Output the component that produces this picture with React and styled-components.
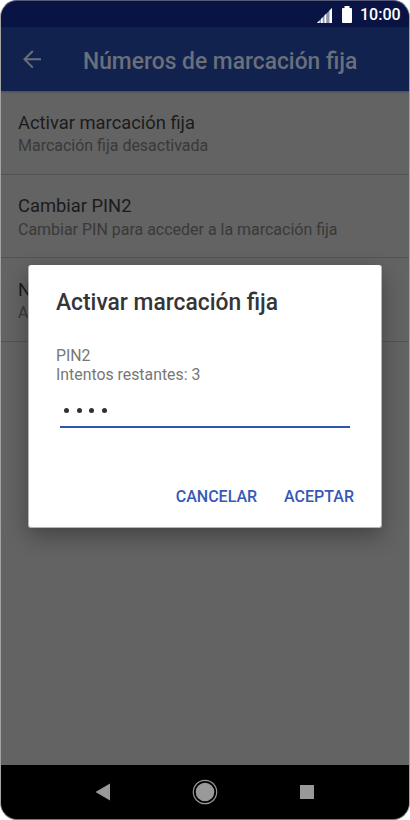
import React from 'react'

import styled, { createGlobalStyle } from 'styled-components'

const GlobalStyle = createGlobalStyle`
  body {
    margin: 0;
    background: #fff;
    font-family: Roboto, 'Liberation Sans', sans-serif;
  }
`

const Screen = styled.main`
  position: relative;
  display: flex;
  flex-direction: column;
  box-sizing: border-box;
  width: 410px;
  height: 820px;
  border: 1px solid #a3a3a3;
  border-top-color: #555a78;
  border-bottom-color: #777;
  border-radius: 17px;
  overflow: hidden;
  background: #636363;
`

const StatusBar = styled.header`
  display: flex;
  align-items: center;
  justify-content: flex-end;
  flex: none;
  box-sizing: border-box;
  height: 26px;
  padding-right: 8px;
  background: #0a1444;
  color: #fff;
  .signal {
    margin: 2px 10px 0 0;
  }
  .battery {
    margin-right: 8px;
  }
`

const Clock = styled.span`
  margin-top: 1px;
  font-size: 16px;
  font-weight: 500;
  line-height: 26px;
  width: 41px;
  white-space: nowrap;
`

const Heading = styled.h1`
  margin: 0;
  font-size: 24px;
  font-weight: 500;
  line-height: 32px;
  white-space: nowrap;
  transform: scaleX(.95);
  transform-origin: left;
`

const AppBar = styled.div`
  display: flex;
  align-items: center;
  flex: none;
  height: 64px;
  padding-left: 21px;
  background: #11224e;
  box-shadow: 0 1px 2px rgba(0, 0, 0, .25);
  color: #6a6f7a;
  ${Heading} {
    margin: 3px 0 0 41px;
  }
`

const List = styled.ul`
  flex: 1;
  margin: 0;
  padding: 0;
  list-style: none;
`

const Row = styled.li`
  box-sizing: border-box;
  height: 83.5px;
  padding: 19.5px 17px 0;
  border-bottom: 1px solid #535353;
`

const RowTitle = styled.div`
  color: #1b1b1b;
  font-size: 18.35px;
  line-height: 24.5px;
`

const RowText = styled.div`
  color: #393939;
  font-size: 15.97px;
  line-height: 21px;
`

const NavBar = styled.nav`
  display: grid;
  grid-template-columns: repeat(3, 102px);
  justify-content: center;
  justify-items: center;
  align-items: center;
  flex: none;
  height: 54px;
  background: #000;
`

// sits over the dimmed settings list
const Dialog = styled.section`
  position: absolute;
  top: 264px;
  left: 27px;
  box-sizing: border-box;
  width: 354px;
  height: 263px;
  padding: 21px 27px 0;
  border: 1px solid #b5b5b5;
  border-top: none;
  border-radius: 3px;
  background: #fff;
  box-shadow: 0 8px 22px rgba(0, 0, 0, .32);
  ${Heading} {
    color: #353537;
  }
`

const Hint = styled.p`
  margin: 28px 0 0;
  color: #777;
  font-size: 15.85px;
  line-height: 19px;
`

const PinField = styled.div`
  display: flex;
  align-items: center;
  gap: 7.6px;
  box-sizing: border-box;
  width: 290px;
  height: 36px;
  margin: 8px 0 0 4px;
  padding: 2px 4px 0;
  border-bottom: 2px solid #2e54b4;
`

const Dot = styled.span`
  width: 5px;
  height: 5px;
  border-radius: 50%;
  background: #303030;
`

const Actions = styled.div`
  display: flex;
  justify-content: flex-end;
  gap: 27px;
  margin-top: 57px;
`

const Button = styled.button`
  padding: 0;
  border: none;
  background: none;
  color: #3559b6;
  font: 500 16px/24px Roboto, 'Liberation Sans', sans-serif;
  cursor: pointer;
`

const rows = [
  { title: 'Activar marcación fija', text: 'Marcación fija desactivada' },
  { title: 'Cambiar PIN2', text: 'Cambiar PIN para acceder a la marcación fija' },
  { title: 'N', text: 'A' },
]

const SignalIcon = () => (
  <svg className="signal" width="15" height="15" viewBox="0 0 15 15">
    <path d="M0 15 15 0V15Z" fill="#8f95b0" />
    <path d="M0 15 2.5 12.5V15ZM4 15V11L5.7 9.3V15ZM7.5 15V7.5L9.2 5.8V15ZM12.5 15V2.5L15 0V15Z" fill="#fff" />
  </svg>
)

const BatteryIcon = () => (
  <svg className="battery" width="10" height="17" viewBox="0 0 10 17">
    <path d="M2.5 0h5v2H9a1 1 0 0 1 1 1v13a1 1 0 0 1-1 1H1a1 1 0 0 1-1-1V3a1 1 0 0 1 1-1h1.5Z" fill="#fff" />
  </svg>
)

const BackIcon = () => (
  <svg width="20" height="20" viewBox="0 0 20 20" fill="none" stroke="currentColor" strokeWidth="2">
    <path d="M19 10.3H3M10.8 2 2.5 10.3l8.3 8.3" />
  </svg>
)

const App = () => (
  <>
    <GlobalStyle />
    <Screen>
      <StatusBar>
        <SignalIcon />
        <BatteryIcon />
        <Clock>10:00</Clock>
      </StatusBar>
      <AppBar>
        <BackIcon />
        <Heading>Números de marcación fija</Heading>
      </AppBar>
      <List>
        {rows.map(row => (
          <Row key={row.title}>
            <RowTitle>{row.title}</RowTitle>
            <RowText>{row.text}</RowText>
          </Row>
        ))}
      </List>
      <NavBar>
        <svg width="16" height="18" viewBox="0 0 16 18">
          <path d="M15 .5v17L.5 9Z" fill="#999" />
        </svg>
        <svg width="26" height="26" viewBox="0 0 26 26">
          <circle cx="13" cy="13" r="11.7" fill="none" stroke="#999" strokeWidth="1.2" />
          <circle cx="13" cy="13" r="9.3" fill="#999" />
        </svg>
        <svg width="14" height="14" viewBox="0 0 14 14">
          <rect width="14" height="14" fill="#999" />
        </svg>
      </NavBar>
      <Dialog>
        <Heading as="h2">Activar marcación fija</Heading>
        <Hint>PIN2<br />Intentos restantes: 3</Hint>
        <PinField>
          <Dot />
          <Dot />
          <Dot />
          <Dot />
        </PinField>
        <Actions>
          <Button>CANCELAR</Button>
          <Button>ACEPTAR</Button>
        </Actions>
      </Dialog>
    </Screen>
  </>
)

export default App
